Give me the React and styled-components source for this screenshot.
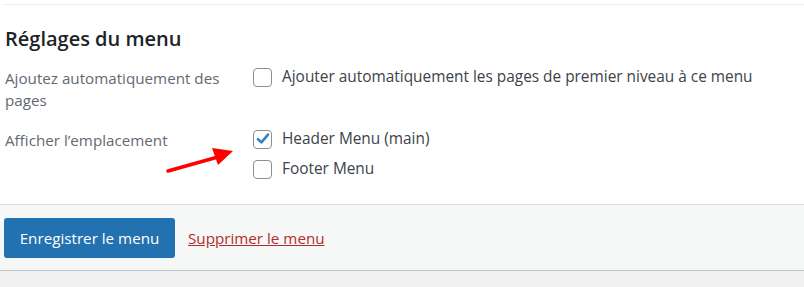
import styled, { createGlobalStyle } from 'styled-components';

const GlobalStyle = createGlobalStyle`
  html, body {
    margin: 0;
    padding: 0;
    background: #f0f0f1;
  }
  body {
    font-family: "Open Sans", "Noto Sans", sans-serif;
    font-size: 15px;
    color: #3c434a;
  }
`;

const Page = styled.div`
  position: relative;
  width: 804px;
  height: 287px;
  overflow: hidden;
  background: #f0f0f1;
`;

const Panel = styled.div`
  background: #fff;
  padding-top: 4px;
`;

const Settings = styled.div`
  margin-left: 3px;
  border-top: 1px solid #ececec;
  padding: 0 2px 25px 2px;
`;

const Heading = styled.h3`
  margin: 0;
  padding-top: 20px;
  font-size: 20px;
  font-weight: 600;
  line-height: 28px;
  color: #1d2327;
  margin-bottom: 14px;
`;

const Row = styled.div`
  display: grid;
  grid-template-columns: 248px 1fr;
  margin-bottom: ${(p) => p.gap || 0}px;
`;

const Label = styled.div`
  width: 225px;
  line-height: 22px;
  color: #646970;
  font-size: 15.2px;
`;

const Options = styled.div`
  display: flex;
  flex-direction: column;
  gap: 10px;
`;

const Option = styled.label`
  display: flex;
  align-items: center;
  gap: 10px;
  line-height: 20px;
  font-size: 15.4px;
  color: #3c434a;
`;

const Box = styled.span`
  width: 17px;
  height: 17px;
  border: 1px solid #8c8f94;
  border-radius: 4px;
  background: #fff;
  display: flex;
  align-items: center;
  justify-content: center;
  flex-shrink: 0;
`;

const Footer = styled.div`
  border-top: 1px solid #dcdcde;
  border-bottom: 1px solid #c3c4c7;
  background: #f6f7f7;
  height: 65px;
  display: flex;
  align-items: center;
  gap: 13px;
  padding-left: 4px;
`;

const SaveButton = styled.button`
  height: 40px;
  width: 171px;
  border: none;
  border-radius: 3px;
  background: #2271b1;
  color: #fff;
  font-family: inherit;
  font-size: 15.2px;
  padding: 0;
`;

const DeleteLink = styled.a`
  color: #b32d2e;
  text-decoration: underline;
  font-size: 15.2px;
`;

const Arrow = styled.svg`
  position: absolute;
  left: 160px;
  top: 145px;
`;

const Checkbox = ({ checked, children }) => (
  <Option>
    <Box>
      {checked && (
        <svg width="16" height="16" viewBox="0 0 16 16">
          <path d="M3 8.2 L6.4 11.4 L13 3.6" fill="none" stroke="#3582c4" strokeWidth="2.6" strokeLinecap="round" strokeLinejoin="round" />
        </svg>
      )}
    </Box>
    {children}
  </Option>
);

export default function App() {
  return (
    <>
      <GlobalStyle />
      <Page>
        <Panel>
          <Settings>
            <Heading>Réglages du menu</Heading>
            <Row gap={18}>
              <Label>Ajoutez automatiquement des pages</Label>
              <Options>
                <Checkbox>Ajouter automatiquement les pages de premier niveau à ce menu</Checkbox>
              </Options>
            </Row>
            <Row>
              <Label>Afficher l’emplacement</Label>
              <Options>
                <Checkbox checked>Header Menu (main)</Checkbox>
                <Checkbox>Footer Menu</Checkbox>
              </Options>
            </Row>
          </Settings>
        </Panel>
        <Footer>
          <SaveButton>Enregistrer le menu</SaveButton>
          <DeleteLink href="#">Supprimer le menu</DeleteLink>
        </Footer>
        <Arrow width="80" height="35" viewBox="0 0 80 35">
          <line x1="8" y1="26" x2="58" y2="12" stroke="#f00" strokeWidth="3.5" strokeLinecap="round" />
          <polygon points="73,6 52,3 58,20" fill="#f00" />
        </Arrow>
      </Page>
    </>
  );
}
